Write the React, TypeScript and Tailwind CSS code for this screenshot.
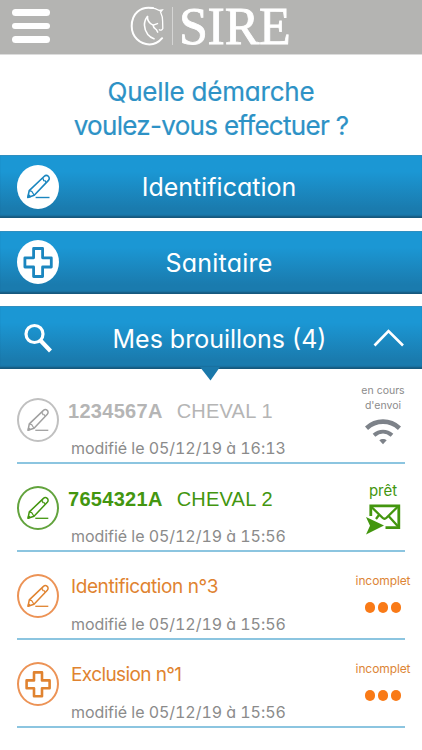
import type { ReactNode } from 'react'

const FUTURA = "font-['Inter','Lato',sans-serif] [font-feature-settings:'cv11']"

function PencilIcon({ className }: { className?: string }) {
  return (
    <svg viewBox="0 0 42 44" fill="none" stroke="currentColor" strokeLinejoin="round" className={className}>
      <path strokeWidth="1.500" d="M11 32.300l1.300-6.400L26.200 12.600c1.200-1.100 2.900-1.200 4-.2s1.200 2.700.1 3.900L17 30.200z" />
      <path strokeWidth="1.100" d="M12.300 25.900l2.400.7 2.300 3.600M24 14.700l1.600.2.200 1.700 1.700.1.300 1.700" />
      <path fill="currentColor" d="M11 32.300l.5-2.800 2.200 2z" />
      <path strokeWidth="1.300" d="M18.300 32.300h13" />
    </svg>
  )
}

function CrossIcon({ className, thick }: { className?: string; thick?: boolean }) {
  return (
    <svg viewBox="0 0 42 44" fill="none" stroke="currentColor" className={className}>
      <path
        strokeWidth={thick ? 2.800 : 2.600}
        strokeLinejoin="round"
        d={
          thick
            ? 'M16.600 8.500h9v9.300h8.700v9.200h-8.700v9.500h-9V27H7.900v-9.200h8.700z'
            : 'M17 10.400h8v8h7.600v7.800H25v8h-8v-8H9.600v-7.800H17z'
        }
      />
    </svg>
  )
}

function HorseLogo() {
  return (
    <svg viewBox="0 0 36 40" fill="none" stroke="white" strokeLinecap="round" className="h-10 w-9">
      <path strokeWidth="2" d="M23 2.100C10-.3 1.700 8 1.700 20c0 11 8.300 18.400 17.800 18.400 5.200 0 9.700-2.600 12.600-6.200" />
      <path strokeWidth="1.300" d="M20 1.900c4.500.1 7 1 9.300 2.600l3-.5-1.700 2.200c1.700 3.600 2.100 5.800 2 8.700l.2 7.600c-.7 1.700-2.200 2.100-3.500 1.300" />
      <path strokeWidth="1.600" d="M17.500 10.500c-4.300 5-3.900 12.500.3 18 2.200 2.700 4.200 3.600 6.200 4.200" />
      <path strokeWidth="1.500" d="M17.500 10.500c-.2 4 2 7 5.500 8.600l4.500-1.500M23 19.100c.2 2.500 2 3.500 3.500 4.800l1.200 2.300" />
    </svg>
  )
}

function WifiIcon() {
  return (
    <svg viewBox="0 0 36 27" className="h-[27px] w-9" fill="none" stroke="#7d8289">
      <path strokeWidth="4.600" d="M1.500 10.200C11 1.400 25 1.400 34.500 10.200" />
      <path strokeWidth="4" d="M9 17.300c5.500-4.800 12.500-4.800 18 0" />
      <path stroke="none" fill="#7d8289" d="M14.300 22.300c2-1.700 5.400-1.700 7.400 0L18 26.300z" />
    </svg>
  )
}

function MailIcon() {
  return (
    <svg viewBox="0 0 36 32" className="h-8 w-9" fill="none" stroke="#43960f">
      <path strokeWidth="2.800" d="M5.800 13V2.800h28v21.900H20.500" />
      <path strokeWidth="2.300" d="M6 3.500L17.500 14.800c1.500 1.500 2.500 1.500 4 0L33 3.500M14 12l-3 4M24 13.500l9.500 10.500" />
      <path stroke="none" fill="#43960f" d="M1 14l18 8.500L1 31.500l4-8.700z" />
    </svg>
  )
}

function Dots() {
  return (
    <div className="flex gap-[3px]">
      <i className="h-[11px] w-[10px] rounded-full bg-[#f97a17]" />
      <i className="h-[11px] w-[10px] rounded-full bg-[#f97a17]" />
      <i className="h-[11px] w-[10px] rounded-full bg-[#f97a17]" />
    </div>
  )
}

const barClass =
  'relative flex h-[63px] w-full items-center justify-center bg-linear-to-b from-[#1b97d4] from-25% to-[#1a7bae] to-85% text-[25px] text-white border-t border-t-[#2f8fc0] shadow-[inset_0_-3px_2px_-1px_#17587c]'

function Bar({ icon, className, children }: { icon: ReactNode; className: string; children: ReactNode }) {
  return (
    <button className={`${barClass} ${className}`}>
      <span className="absolute left-[17px] top-[8.500px] flex h-11 w-[42px] items-center justify-center rounded-[50%] bg-white text-[#1b86bf]">
        {icon}
      </span>
      {children}
    </button>
  )
}

function HorseTitle({ id, name }: { id: string; name: string }) {
  return (
    <div className="ml-[9px] flex gap-[14px] font-['Liberation_Sans',sans-serif] text-[20px]">
      <b className="tracking-[0.300px]">{id}</b>
      <span className="tracking-[0.200px]">{name}</span>
    </div>
  )
}

type DraftProps = {
  icon: ReactNode
  color: string
  title: ReactNode
  date: string
  status: ReactNode
}

function Draft({ icon, color, title, date, status }: DraftProps) {
  return (
    <li className="mx-[17px] flex h-[88px] border-b-2 border-[#8cc5e0]">
      <div className={`mt-[22px] h-11 w-[42px] shrink-0 rounded-[50%] border-2 ${color}`}>
        <div className="-m-0.5">{icon}</div>
      </div>
      <div className="w-[280px] shrink-0 pt-[23px]">
        <div className={`h-6 whitespace-nowrap leading-6 ${color}`}>{title}</div>
        <div className="ml-3 mt-[15px] whitespace-nowrap text-[16px] leading-5 tracking-[-0.050px] text-[#8b8b8b] [font-feature-settings:'cv11','tnum']">
          modifié le {date}
        </div>
      </div>
      <div className="-mr-[22px] flex grow flex-col items-center">{status}</div>
    </li>
  )
}

function Incomplete() {
  return (
    <>
      <span className="mt-[21px] text-[12px] leading-4 tracking-[-0.100px] text-[#dd8535]">incomplet</span>
      <div className="mt-[13px]">
        <Dots />
      </div>
    </>
  )
}

export default function App() {
  return (
    <div className={`h-[750px] w-[422px] bg-white ${FUTURA}`}>
      <header className="flex h-[54px] items-start bg-[#b4b4b2] shadow-[0_1px_0_#dcdcdc]">
        <div className="ml-3 mt-[9px] flex w-[38px] flex-col gap-[7px]">
          <i className="h-[6.500px] rounded-full bg-white" />
          <i className="h-[6.500px] rounded-full bg-white" />
          <i className="h-[6.500px] rounded-full bg-white" />
        </div>
        <div className="ml-[80px] mt-1.5">
          <HorseLogo />
        </div>
        <div className="ml-1.5 mt-[7px] h-[38px] w-px bg-[#d5d5d4]" />
        <span className="ml-[6px] font-['Liberation_Serif',serif] text-[52px] leading-[53px] tracking-[-0.300px] text-white [-webkit-text-stroke:0.800px_white]">
          SIRE
        </span>
      </header>

      <h1 className="mt-[21px] text-center text-[26px] leading-[34px] text-[#2d92c6] [-webkit-text-stroke:0.200px_#2d92c6]">
        <span className="block tracking-[-0.200px]">Quelle démarche</span>
        <span className="block tracking-[-0.700px]">voulez-vous effectuer ?</span>
      </h1>

      <nav className="mt-[12px] flex flex-col gap-[12.500px]">
        <Bar icon={<PencilIcon className="h-[47px] w-[45px] shrink-0" />} className="pl-4 pt-0.5">
          Identification
        </Bar>
        <Bar icon={<CrossIcon thick className="h-11 w-[42px]" />} className="pl-4 pt-[3px] tracking-[0.200px]">
          Sanitaire
        </Bar>
        <button className={`${barClass} pl-[17px] pt-1`}>
          <svg viewBox="0 0 28 30" fill="none" stroke="white" className="absolute left-6 top-4 h-[30px] w-7">
            <circle cx="10.500" cy="11" r="8.500" strokeWidth="3.200" />
            <path strokeWidth="4.200" d="M16.500 17.500l10 10.500" />
          </svg>
          Mes brouillons (4)
          <svg viewBox="0 0 32 18" fill="none" stroke="white" strokeWidth="2.600" className="absolute right-[17px] top-[22px] h-[18px] w-8">
            <path d="M1.500 16.500L15.500 2l14.500 14.500" />
          </svg>
          <svg viewBox="0 0 20 14" className="absolute left-[200px] top-[60px] h-3.5 w-5">
            <path fill="#1a78aa" d="M0 0h20L10.500 13.500z" />
          </svg>
        </button>
      </nav>

      <ul className="mt-[7px]">
        <Draft
          icon={<PencilIcon className="h-11 w-[42px] text-[#a0a0a0]" />}
          color="border-[#c0c0c0] text-[#b5b5b5]"
          title={<HorseTitle id="1234567A" name="CHEVAL 1" />}
          date="05/12/19 à 16:13"
          status={
            <>
              <span className="mt-[7px] text-center text-[10.500px] leading-[15px] text-[#8b8b8b]">
                en cours
                <br />
                d'envoi
              </span>
              <div className="mt-[5px]">
                <WifiIcon />
              </div>
            </>
          }
        />
        <Draft
          icon={<PencilIcon className="h-11 w-[42px]" />}
          color="border-[#62a33d] text-[#43960f]"
          title={<HorseTitle id="7654321A" name="CHEVAL 2" />}
          date="05/12/19 à 15:56"
          status={
            <>
              <span className="mt-[17px] text-[15px] leading-5 text-[#43960f]">prêt</span>
              <div className="mt-[2px]">
                <MailIcon />
              </div>
            </>
          }
        />
        <Draft
          icon={<PencilIcon className="h-11 w-[42px]" />}
          color="border-[#ec9356] text-[#e08330]"
          title={<div className="ml-3 text-[19px] tracking-[-0.400px]">Identification n°3</div>}
          date="05/12/19 à 15:56"
          status={<Incomplete />}
        />
        <Draft
          icon={<CrossIcon className="h-11 w-[42px]" />}
          color="border-[#ec9356] text-[#e08330]"
          title={<div className="ml-3 text-[19px] tracking-[-0.600px]">Exclusion n°1</div>}
          date="05/12/19 à 15:56"
          status={<Incomplete />}
        />
      </ul>
    </div>
  )
}
